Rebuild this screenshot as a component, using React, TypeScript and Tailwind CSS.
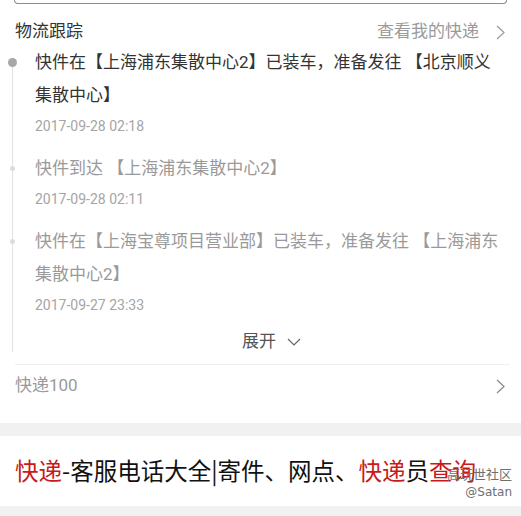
import React from "react";

type Track = { text: string; time: string; active?: boolean };

const tracks: Track[] = [
  {
    text: "快件在【上海浦东集散中心2】已装车，准备发往 【北京顺义集散中心】",
    time: "2017-09-28 02:18",
    active: true,
  },
  { text: "快件到达 【上海浦东集散中心2】", time: "2017-09-28 02:11" },
  {
    text: "快件在【上海宝尊项目营业部】已装车，准备发往 【上海浦东集散中心2】",
    time: "2017-09-27 23:33",
  },
];

function ChevronRight({ className }: { className?: string }) {
  return (
    <svg width="9" height="15" viewBox="0 0 9 15" className={className}>
      <polyline points="1,1 8,7.5 1,14" fill="none" stroke="currentColor" strokeWidth="1.2" />
    </svg>
  );
}

export default function App() {
  return (
    <div className="w-[521px] h-[516px] overflow-hidden bg-white font-['Roboto','Noto_Sans_CJK_SC',sans-serif]">
      {/* bottom edge of the box above */}
      <div className="mx-[14px] h-[4px] border-x-[1.5px] border-b-[1.5px] border-[#8c8c8c] rounded-b-[6px]" />

      {/* header */}
      <div className="flex items-center justify-between h-[42px] pt-[14px] pl-[15px] pr-[16px]">
        <span className="text-[17px] text-[#333]">物流跟踪</span>
        <div className="flex items-center gap-[17px] text-[#9a9a9a]">
          <span className="text-[17px]">查看我的快递</span>
          <ChevronRight />
        </div>
      </div>

      {/* timeline */}
      <div className="relative pl-[35px] pr-[10px]">
        <div className="absolute left-[12px] top-[17px] bottom-0 w-px bg-[#e2e2e2]" />
        {tracks.map((t) => (
          <div key={t.time} className="relative pb-[16px]">
            {t.active ? (
              <span className="absolute left-[-27px] top-[12px] w-[9px] h-[9px] rounded-full bg-[#a8a8a8]" />
            ) : (
              <span className="absolute left-[-25px] top-[14px] w-[5px] h-[5px] rounded-full bg-[#dcdcdc]" />
            )}
            <p
              className={`text-[17px] leading-[33px] max-w-[472px] ${
                t.active ? "text-[#333]" : "text-[#9a9a9a]"
              }`}
            >
              {t.text}
            </p>
            <p className="mt-[4px] text-[14px] leading-[20px] text-[#a5a5a5]">{t.time}</p>
          </div>
        ))}
        <div className="flex items-center justify-center gap-[11px] h-[21px] pr-[3px] text-[#555]">
          <span className="text-[17px]">展开</span>
          <svg width="14" height="8" viewBox="0 0 14 8">
            <polyline points="1,1 7,7 13,1" fill="none" stroke="#666" strokeWidth="1.2" />
          </svg>
        </div>
      </div>

      {/* source row */}
      <div className="mt-[12px] mx-[15px] mr-[11px] border-t-[1.5px] border-[#efefef]">
        <div className="flex items-center justify-between h-[42px] pr-[5px]">
          <span className="text-[17px] text-[#9a9a9a]">快递100</span>
          <ChevronRight className="text-[#888]" />
        </div>
      </div>

      <div className="mt-[16px] h-[13px] bg-[#f1f1f1]" />

      {/* related article */}
      <div className="relative flex items-center h-[70px] pl-[15px]">
        <p className="text-[23.5px] text-[#111] font-['Noto_Sans_CJK_SC',sans-serif] whitespace-nowrap">
          <span className="text-[#c81a1a]">快递</span>-客服电话大全|寄件、网点、
          <span className="text-[#c81a1a]">快递</span>员<span className="text-[#c81a1a]">查询</span>
        </p>
        <div className="absolute right-[9px] top-[31px] flex flex-col items-end text-[#6f6f6f] leading-none">
          <span className="text-[13px] font-['Noto_Sans_CJK_SC',sans-serif]">高玩世社区</span>
          <span className="mt-[6px] text-[12px] font-['DejaVu_Sans',sans-serif]">@Satan</span>
        </div>
      </div>

      <div className="h-[10px] bg-[#f1f1f1]" />
    </div>
  );
}
